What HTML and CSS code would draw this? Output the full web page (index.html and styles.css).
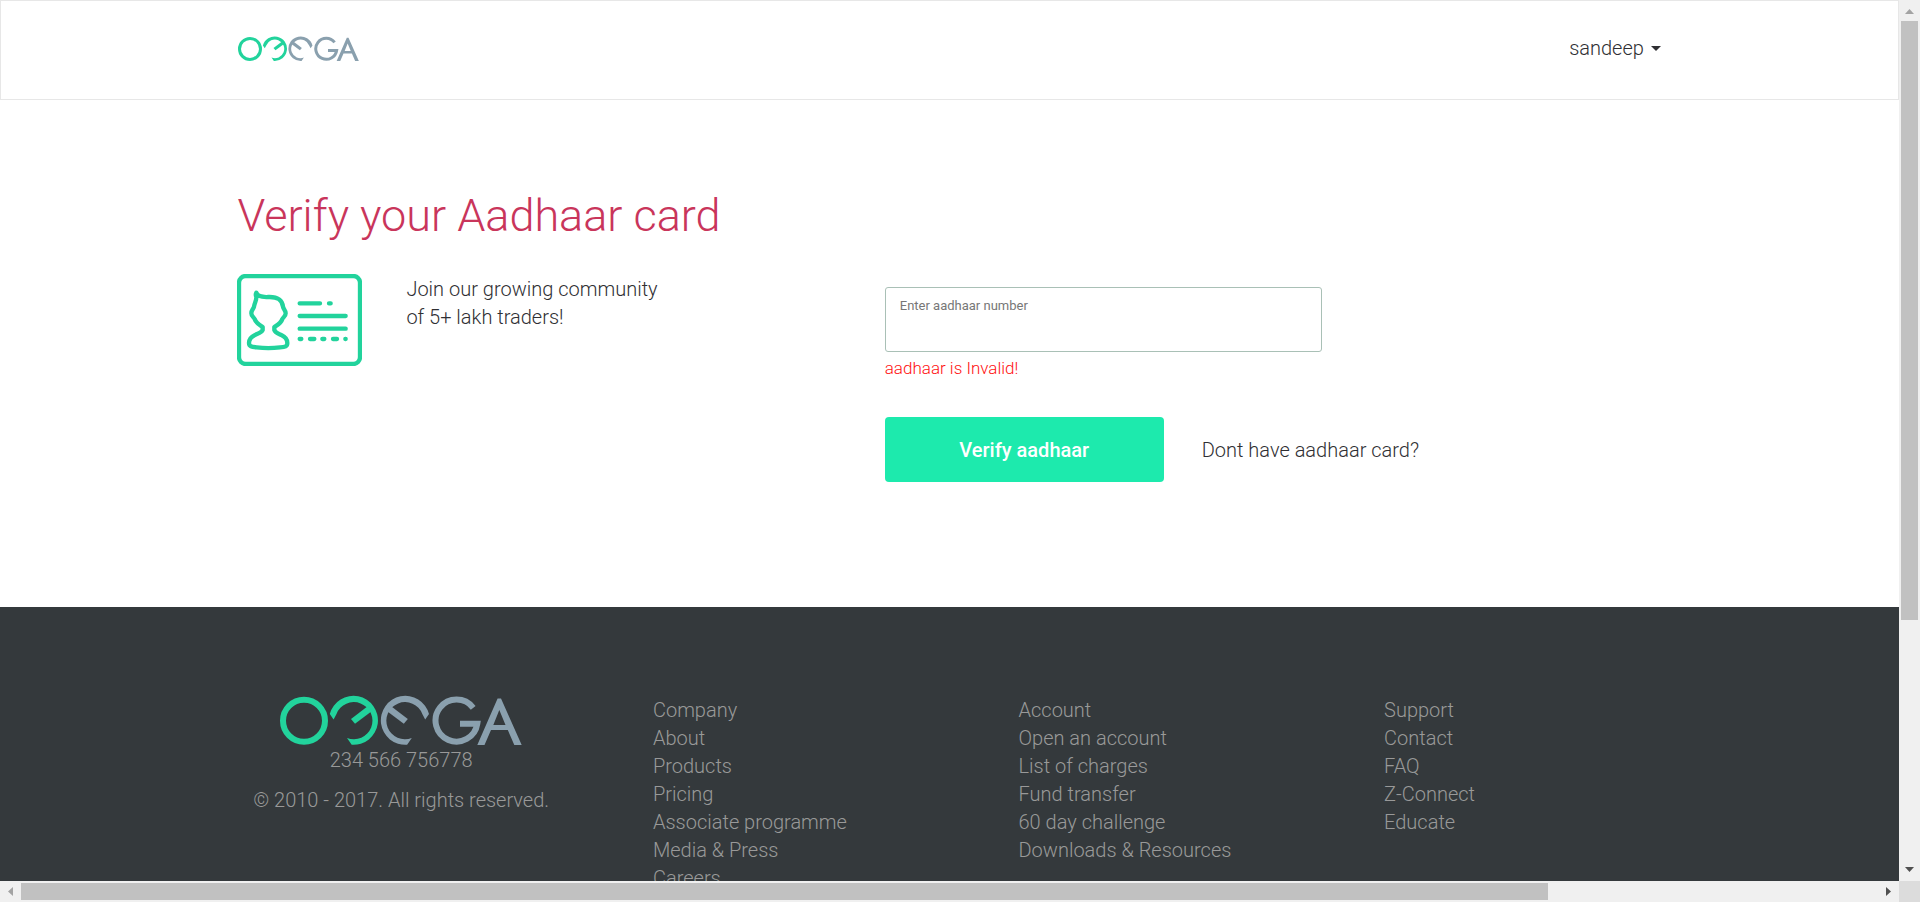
FILE: index.html
```html
<!DOCTYPE html>
<html lang="en">
<head>
<meta charset="utf-8">
<meta name="viewport" content="width=device-width, initial-scale=1">
<title>Verify your Aadhaar card</title>
<link rel="stylesheet" href="styles.css">
</head>
<body>
<div class="window">
  <div class="page">
    <header class="topbar">
      <div class="container topbar-inner">
        <a class="brand" href="#" aria-label="Omega">
          <svg class="logo logo-small" viewBox="0 0 242 50" aria-hidden="true">
            <g id="omega">
              <circle class="ring" cx="24" cy="25.8" r="21"/>
              <g class="green">
                <path d="M49.8 19A24.5 24.5 0 1 1 71.7 49.8L67 43A18.6 18.6 0 1 0 56.500 19L53.6 24.5z"/>
                <path d="M71 24L88 11L92 16L75 28.700z"/>
              </g>
              <g class="grey" transform="translate(198.8 0) scale(-1 1)">
                <path d="M49.8 19A24.5 24.5 0 1 1 71.7 49.8L67 43A18.6 18.6 0 1 0 56.500 19L53.6 24.5z"/>
                <path d="M71 24L88 11L92 16L75 28.700z"/>
              </g>
              <path class="grey-line" d="M193.2 12.8A21 21 0 1 0 197.3 28.8H180"/>
              <path class="grey" fill-rule="evenodd" d="M197.3 50L217.6 3.5H221L241.7 50H234.3L227.8 35H211L204.5 50zM213.3 30H225.5L219.3 15z"/>
            </g>
          </svg>
        </a>
        <button class="user-menu" type="button">sandeep <span class="caret"></span></button>
      </div>
    </header>

    <main class="container verify">
      <h1 class="title">Verify your Aadhaar card</h1>
      <div class="columns">
        <section class="intro">
          <svg class="card-icon" viewBox="51 312 375 276" aria-hidden="true">
            <rect x="57" y="318" width="363" height="264" rx="20"/>
            <path d="M109 368C112 379 124 382 145 381C172 380 186 388 189 410C190 418 197 420 197 430C197 440 190 440 187 447C183 460 174 464 163 471V480C166 489 176 491 184 495C197 501 202 507 202 519C202 529 196 531 180 532C157 535 133 535 110 532C94 530 87 529 87 519C87 507 92 501 105 495C113 491 125 488 128 480V471C117 464 108 460 104 447C101 440 94 440 94 430C94 420 100 418 102 410C103 399 110 392 109 380C106 375 107 372 109 368z"/>
            <path d="M239 400H300M327 400H332M239 438H377M239 476H377M239 507H244M270 507H283M307 507H313M339 507H351M376 507H377"/>
          </svg>
          <p class="lead">Join our growing community<br>of 5+ lakh traders!</p>
        </section>
        <form class="form">
          <div class="field">
            <label class="field-label" for="aadhaar">Enter aadhaar number</label>
            <input class="field-input" id="aadhaar" type="text" aria-describedby="aadhaar-error">
          </div>
          <p class="error" id="aadhaar-error">aadhaar is Invalid!</p>
          <div class="actions">
            <button class="submit" type="button">Verify aadhaar</button>
            <a class="alt-link" href="#">Dont have aadhaar card?</a>
          </div>
        </form>
      </div>
    </main>

    <footer class="footer">
      <div class="container footer-grid">
        <div class="about">
          <svg class="logo logo-large" viewBox="0 0 242 50" aria-hidden="true"><use href="#omega"/></svg>
          <p class="phone">234 566 756778</p>
          <p class="copyright">© 2010 - 2017. All rights reserved.</p>
        </div>
        <ul class="links">
          <li><a href="#">Company</a></li>
          <li><a href="#">About</a></li>
          <li><a href="#">Products</a></li>
          <li><a href="#">Pricing</a></li>
          <li><a href="#">Associate programme</a></li>
          <li><a href="#">Media &amp; Press</a></li>
          <li><a href="#">Careers</a></li>
        </ul>
        <ul class="links">
          <li><a href="#">Account</a></li>
          <li><a href="#">Open an account</a></li>
          <li><a href="#">List of charges</a></li>
          <li><a href="#">Fund transfer</a></li>
          <li><a href="#">60 day challenge</a></li>
          <li><a href="#">Downloads &amp; Resources</a></li>
        </ul>
        <ul class="links">
          <li><a href="#">Support</a></li>
          <li><a href="#">Contact</a></li>
          <li><a href="#">FAQ</a></li>
          <li><a href="#">Z-Connect</a></li>
          <li><a href="#">Educate</a></li>
        </ul>
      </div>
    </footer>
  </div>

  <div class="bar bar-y" aria-hidden="true">
    <svg class="arrow" viewBox="0 0 21 21"><path fill="#a3a3a3" d="M6 14L10.500 9L15 14z"/></svg>
    <div class="track track-y"><div class="thumb"></div></div>
    <svg class="arrow" viewBox="0 0 21 21"><path fill="#505050" d="M6 7H15L10.500 12z"/></svg>
  </div>
  <div class="bar bar-x" aria-hidden="true">
    <svg class="arrow" viewBox="0 0 21 21"><path fill="#a3a3a3" d="M13 6V15L8 10.500z"/></svg>
    <div class="track track-x"><div class="thumb"></div></div>
    <svg class="arrow" viewBox="0 0 21 21"><path fill="#505050" d="M8 6V15L13 10.500z"/></svg>
  </div>
  <div class="corner"></div>
</div>
</body>
</html>
```
FILE: styles.css
```css
* {
  box-sizing: border-box;
}

body {
  margin: 0;
  background: #fff;
  color: #2f2f33;
  font-family: Roboto, "Liberation Sans", sans-serif;
  font-size: 20px;
  font-weight: 300;
  line-height: 28px;
}

p,
h1,
ul {
  margin: 0;
  padding: 0;
}

a {
  color: inherit;
  text-decoration: none;
}

button,
input {
  font: inherit;
  color: inherit;
}

/* Window frame: page plus its two scrollbars */
.window {
  display: grid;
  grid-template: minmax(0, 1fr) 21px / minmax(0, 1fr) 21px;
  height: 100vh;
}

.page {
  display: flex;
  flex-direction: column;
  overflow: hidden;
}

.page > * {
  flex-shrink: 0;
}

.container {
  width: 75%;
  margin: 0 auto;
}

/* Header */
.topbar {
  padding: 33px 0 37px;
  border: 1px solid #e7e7e7;
}

.topbar-inner {
  display: flex;
  align-items: center;
  justify-content: space-between;
  min-height: 28px;
}

.brand {
  display: flex;
}

.logo {
  display: block;
}

.logo-small {
  width: 121px;
  height: 25px;
}

.logo-large {
  width: 242px;
  height: 50px;
}

.ring {
  fill: none;
  stroke: #22d39c;
  stroke-width: 6;
}

.green {
  fill: #22d39c;
}

.grey {
  fill: #8aa0ae;
}

.grey-line {
  fill: none;
  stroke: #8aa0ae;
  stroke-width: 6;
}

.user-menu {
  display: flex;
  align-items: center;
  gap: 7px;
  padding: 0;
  border: 0;
  background: none;
}

.caret {
  border: 5px solid transparent;
  border-top-color: #2f2f33;
  border-bottom: 0;
}

/* Verification form */
.verify {
  padding: 88px 0 125px;
}

.title {
  color: #c9355b;
  font-size: 45px;
  font-weight: 300;
  line-height: 56px;
}

.columns {
  display: grid;
  grid-template-columns: 5fr 6fr;
  padding-top: 30px;
}

.intro {
  display: flex;
  align-items: flex-start;
  gap: 44px;
}

.lead {
  padding-top: 1px;
}

.card-icon {
  width: 125px;
  height: 92px;
  fill: none;
  stroke: #22d39c;
  stroke-width: 13;
  stroke-linecap: round;
  stroke-linejoin: round;
}

.form {
  padding-top: 13px;
}

.field {
  display: flex;
  flex-direction: column;
  width: 437px;
  max-width: 100%;
  padding: 8px 14px;
  border: 1px solid #a9c0b6;
  border-radius: 3px;
}

.field-label {
  color: #777;
  font-size: 13px;
  font-weight: 400;
  line-height: 20px;
}

.field-input {
  width: 100%;
  height: 27px;
  padding: 0;
  border: 0;
  outline: 0;
  background: none;
}

.error {
  padding-top: 4px;
  color: #f11;
  font-size: 17px;
  line-height: 24px;
}

.actions {
  display: flex;
  align-items: center;
  gap: 38px;
  padding-top: 37px;
}

.submit {
  width: 279px;
  height: 65px;
  border: 0;
  border-radius: 4px;
  background: #1deaad;
  color: #fff;
  font-size: 20px;
  font-weight: 500;
}

/* Footer */
.footer {
  padding: 88px 0;
  background: #34393c;
  color: #999;
}

.footer-grid {
  display: grid;
  grid-template-columns: 23% 1fr 1fr 1fr;
  column-gap: 88px;
}

.about {
  display: flex;
  flex-direction: column;
  align-items: center;
  white-space: nowrap;
}

.phone {
  padding-top: 1px;
}

.copyright {
  padding-top: 12px;
}

.links {
  padding-top: 1px;
  list-style: none;
}

/* Scrollbars */
.bar {
  display: flex;
  background: #f0f0f0;
}

.bar-y {
  flex-direction: column;
}

.arrow {
  flex: none;
  width: 21px;
  height: 21px;
}

.track {
  display: grid;
  flex: 1;
}

.track-y {
  grid-template-rows: 599fr 240fr;
  padding: 0 2px;
}

.track-x {
  grid-template-columns: 1527fr 330fr;
  padding: 2px 0;
}

.thumb {
  background: #c1c1c1;
}

.corner {
  background: #dcdcdc;
}
```
